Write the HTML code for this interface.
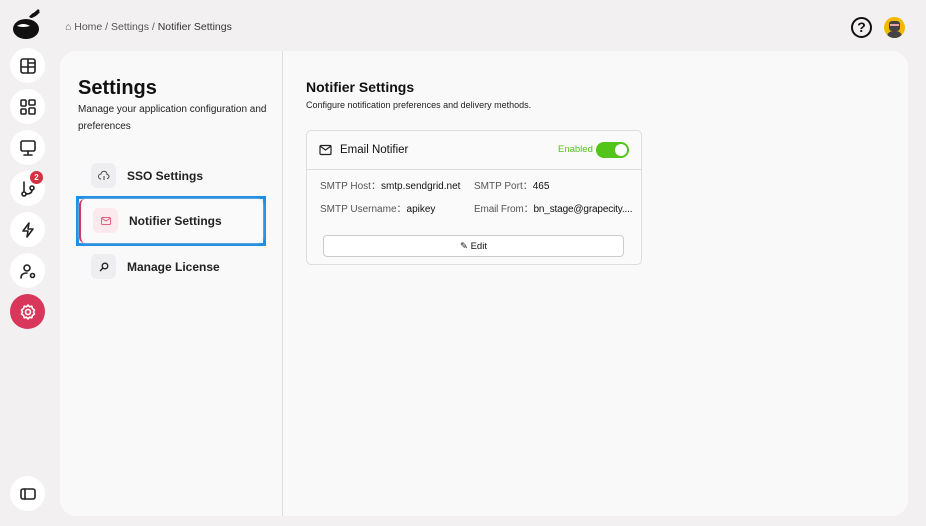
<!DOCTYPE html>
<html><head><style>
*{box-sizing:border-box;margin:0;padding:0}
body{width:926px;height:526px;background:#f2f0f1;font-family:"Liberation Sans",sans-serif;position:relative;overflow:hidden;color:#111}
.ic{position:absolute;left:10px;width:35px;height:35px;border-radius:50%;background:#fff;display:flex;align-items:center;justify-content:center}
.ic svg{width:18px;height:18px;fill:none;stroke:#222;stroke-width:1.6;stroke-linecap:round;stroke-linejoin:round}
.panel{position:absolute;left:60px;top:51px;width:848px;height:465px;background:#f9f9fa;border-radius:16px}
.div{position:absolute;left:282px;top:51px;width:1px;height:465px;background:#ddd}
.abs{position:absolute}
.mi{position:absolute;display:flex;align-items:center;font-size:12px;font-weight:bold;color:#222}
.mi .b{width:25px;height:25px;border-radius:6px;background:#eeeef0;display:flex;align-items:center;justify-content:center;margin-right:11px}
.lbl{color:#555;font-size:10px;line-height:12px}
.val{color:#111;font-size:10px}
</style></head><body>
<svg class="abs" style="left:11px;top:8px" width="32" height="32" viewBox="0 0 32 32"><path d="M20 9 L28 2" stroke="#111" stroke-width="2.5"/><path d="M18 9 Q22 3 29 4 Q25 9 20 10Z" fill="#111"/><ellipse cx="15" cy="21" rx="13" ry="10" fill="#111"/><path d="M6 18 Q12 14 19 18 Q12 20 6 18Z" fill="#fff"/></svg>
<div class="abs" style="left:65px;top:21px;font-size:10.5px;color:#555">⌂ Home / Settings / <span style="color:#333">Notifier Settings</span></div>
<div class="abs" style="left:851px;top:17px;width:21px;height:21px;border:2px solid #111;border-radius:50%;text-align:center;font-size:14px;font-weight:bold;line-height:17px">?</div>
<div class="abs" style="left:884px;top:17px;width:21px;height:21px;border-radius:50%;background:#f5b800;overflow:hidden"><div style="position:absolute;left:5px;top:4px;width:11px;height:10px;border-radius:3px;background:#444"></div><div style="position:absolute;left:3px;top:14px;width:15px;height:8px;border-radius:6px 6px 0 0;background:#444"></div><div style="position:absolute;left:6px;top:7px;width:9px;height:2px;background:#f2a0a0"></div></div>

<div class="ic" style="top:48px"><svg viewBox="0 0 18 18"><rect x="2" y="2" width="14" height="14" rx="2"/><path d="M2 10h14M9 2v14M9 6h7"/></svg></div>
<div class="ic" style="top:89px"><svg viewBox="0 0 18 18"><rect x="2" y="2" width="5" height="6" rx="1"/><rect x="10" y="2" width="6" height="5" rx="1"/><rect x="2" y="11" width="5" height="5" rx="1"/><rect x="10" y="10" width="6" height="6" rx="1"/></svg></div>
<div class="ic" style="top:130px"><svg viewBox="0 0 18 18"><rect x="2" y="2" width="14" height="10" rx="1.5"/><path d="M9 12v3M5 16h8"/></svg></div>
<div class="ic" style="top:171px"><svg viewBox="0 0 18 18"><path d="M5 2v9"/><circle cx="5" cy="14" r="2"/><circle cx="13" cy="8" r="2"/><path d="M13 10q0 4-6 4"/></svg></div>
<div class="abs" style="left:30px;top:171px;width:13px;height:13px;border-radius:50%;background:#d63040;color:#fff;font-size:8px;font-weight:bold;text-align:center;line-height:13px">2</div>
<div class="ic" style="top:212px"><svg viewBox="0 0 18 18"><path d="M10 2L4 10h5l-1 6 6-8H9z"/></svg></div>
<div class="ic" style="top:253px"><svg viewBox="0 0 18 18"><circle cx="8" cy="6" r="3"/><path d="M2 16q0-5 6-5"/><circle cx="13.5" cy="13.5" r="2"/></svg></div>
<div class="ic" style="top:294px;background:#d8365a"><svg viewBox="0 0 18 18" style="stroke:#fff"><circle cx="9" cy="9" r="2.5"/><path d="M9 2l1.5 1.8 2.3-.6.6 2.3L15.5 7l-1 2 1 2-2.1 1.5-.6 2.3-2.3-.6L9 16l-1.5-1.8-2.3.6-.6-2.3L2.5 11l1-2-1-2 2.1-1.5.6-2.3 2.3.6z"/></svg></div>
<div class="ic" style="top:476px"><svg viewBox="0 0 18 18"><rect x="2" y="4" width="14" height="10" rx="2"/><path d="M6 4v10"/></svg></div>

<div class="panel"></div>
<div class="div"></div>
<div class="abs" style="left:78px;top:77px;font-size:20px;font-weight:bold">Settings</div>
<div class="abs" style="left:78px;top:102px;font-size:10px;line-height:16.5px;width:195px;color:#222">Manage your application configuration and preferences</div>

<div class="mi" style="left:91px;top:163px"><div class="b"><svg width="12" height="12" viewBox="0 0 12 12" fill="none" stroke="#444"><path d="M3 9a2.5 2.5 0 0 1 0-5 3 3 0 0 1 6 .5 2 2 0 0 1 0 4"/><path d="M6 6v4"/></svg></div>SSO Settings</div>
<div class="abs" style="left:76px;top:196px;width:190px;height:50px;border:3px solid #1e8fe6"></div>
<div class="abs" style="left:79px;top:199px;width:184px;height:44px;border-radius:6px;background:#fafafb;border-left:2px solid #d8365a;box-shadow:0 0 2px #ccc"></div>
<div class="mi" style="left:93px;top:208px"><div class="b" style="background:#fbe9ee"><svg width="12" height="12" viewBox="0 0 12 12" fill="none" stroke="#e06080"><rect x="1.5" y="2.5" width="9" height="7" rx="1"/><path d="M1.5 3l4.5 3 4.5-3"/></svg></div>Notifier Settings</div>
<div class="mi" style="left:91px;top:254px"><div class="b"><svg width="12" height="12" viewBox="0 0 12 12" fill="none" stroke="#222" stroke-width="1.3"><circle cx="7" cy="5" r="2.8"/><path d="M5 7L2 10"/></svg></div>Manage License</div>

<div class="abs" style="left:306px;top:79px;font-size:14px;font-weight:bold">Notifier Settings</div>
<div class="abs" style="left:306px;top:100px;font-size:9px;color:#222">Configure notification preferences and delivery methods.</div>

<div class="abs" style="left:306px;top:130px;width:336px;height:135px;border:1px solid #ddd;border-radius:5px;background:#fafafa"></div>
<div class="abs" style="left:307px;top:169px;width:334px;height:1px;background:#ddd"></div>
<svg class="abs" style="left:319px;top:144px" width="13" height="12" viewBox="0 0 13 12" fill="none" stroke="#222" stroke-width="1.2"><rect x="1" y="1.5" width="11" height="9" rx="1"/><path d="M1 2l5.5 4 5.5-4"/></svg>
<div class="abs" style="left:340px;top:144px;font-size:11.5px;color:#111">Email Notifier</div>
<div class="abs" style="left:558px;top:144px;font-size:9.5px;color:#52c41a">Enabled</div>
<div class="abs" style="left:596px;top:142px;width:33px;height:16px;border-radius:8px;background:#52c41a"><div style="position:absolute;right:2px;top:2px;width:12px;height:12px;border-radius:50%;background:#fff"></div></div>
<div class="abs lbl" style="left:320px;top:181px">SMTP Host：<span class="val">smtp.sendgrid.net</span></div>
<div class="abs lbl" style="left:474px;top:181px">SMTP Port：<span class="val">465</span></div>
<div class="abs lbl" style="left:320px;top:204px">SMTP Username：<span class="val">apikey</span></div>
<div class="abs lbl" style="left:474px;top:204px;white-space:nowrap;letter-spacing:-0.15px">Email From：<span class="val">bn_stage@grapecity....</span></div>
<div class="abs" style="left:323px;top:235px;width:301px;height:22px;border:1px solid #ccc;border-radius:4px;background:#fff;text-align:center;font-size:9.5px;line-height:21px">✎ Edit</div>
</body></html>
